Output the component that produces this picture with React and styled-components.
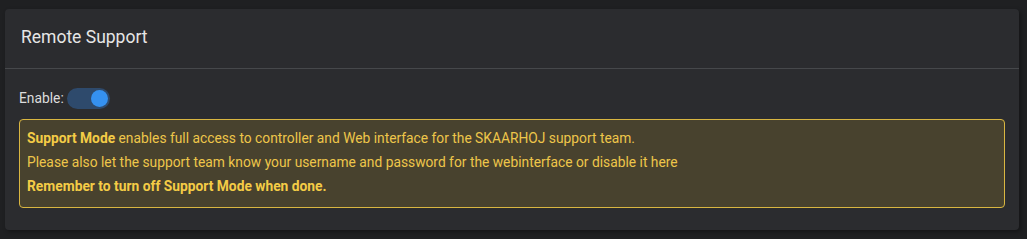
import React from 'react';
import styled, { createGlobalStyle } from 'styled-components';

const GlobalStyle = createGlobalStyle`
  html, body {
    margin: 0;
    padding: 0;
    background: #1f2022;
  }
  body {
    font-family: Roboto, "Open Sans", sans-serif;
  }
`;

function App() {
  return (
    <>
      <GlobalStyle />
      <Page>
        <Card>
          <CardHeader>Remote Support</CardHeader>
          <CardBody>
            <EnableRow>
              <Label>Enable:</Label>
              <Switch on />
            </EnableRow>
            <Alert>
              <AlertLine>
                <strong>Support Mode</strong> enables full access to controller and Web interface for the SKAARHOJ support team.
              </AlertLine>
              <AlertLine>
                Please also let the support team know your username and password for the webinterface or disable it here
              </AlertLine>
              <AlertLine>
                <strong>Remember to turn off Support Mode when done.</strong>
              </AlertLine>
            </Alert>
          </CardBody>
        </Card>
      </Page>
    </>
  );
}

const Page = styled.div`
  padding: 9px 8px 10px 5px;
`;

const Card = styled.div`
  background: #2b2c2f;
  border-radius: 4px;
  box-shadow: 2px 2px 4px rgba(0, 0, 0, 0.35);
`;

const CardHeader = styled.div`
  height: 60px;
  box-sizing: border-box;
  padding: 18px 0 0 16px;
  font-size: 17.5px;
  color: #e6e6e6;
  border-bottom: 1px solid #46484b;
`;

const CardBody = styled.div`
  padding: 18px 14px 22px 14px;
`;

const EnableRow = styled.div`
  display: flex;
  align-items: center;
  gap: 3px;
  height: 22px;
  margin-bottom: 10px;
`;

const Label = styled.span`
  font-size: 13.8px;
  color: #dcdcdc;
`;

const Switch = styled.div`
  position: relative;
  width: 43px;
  height: 21px;
  border-radius: 11px;
  background: ${p => (p.on ? '#2e4a6c' : '#444')};

  &::after {
    content: '';
    position: absolute;
    top: 2px;
    left: ${p => (p.on ? '24px' : '3px')};
    width: 17px;
    height: 17px;
    border-radius: 50%;
    background: #3591f0;
  }
`;

const Alert = styled.div`
  border: 1px solid #d9b641;
  border-radius: 4px;
  background: #48422e;
  padding: 6px 0 9px 7px;
  color: #eec64a;
  font-size: 13.8px;

  strong {
    font-weight: 700;
    color: #f4cc46;
  }
`;

const AlertLine = styled.div`
  line-height: 24px;
`;

export default App;
